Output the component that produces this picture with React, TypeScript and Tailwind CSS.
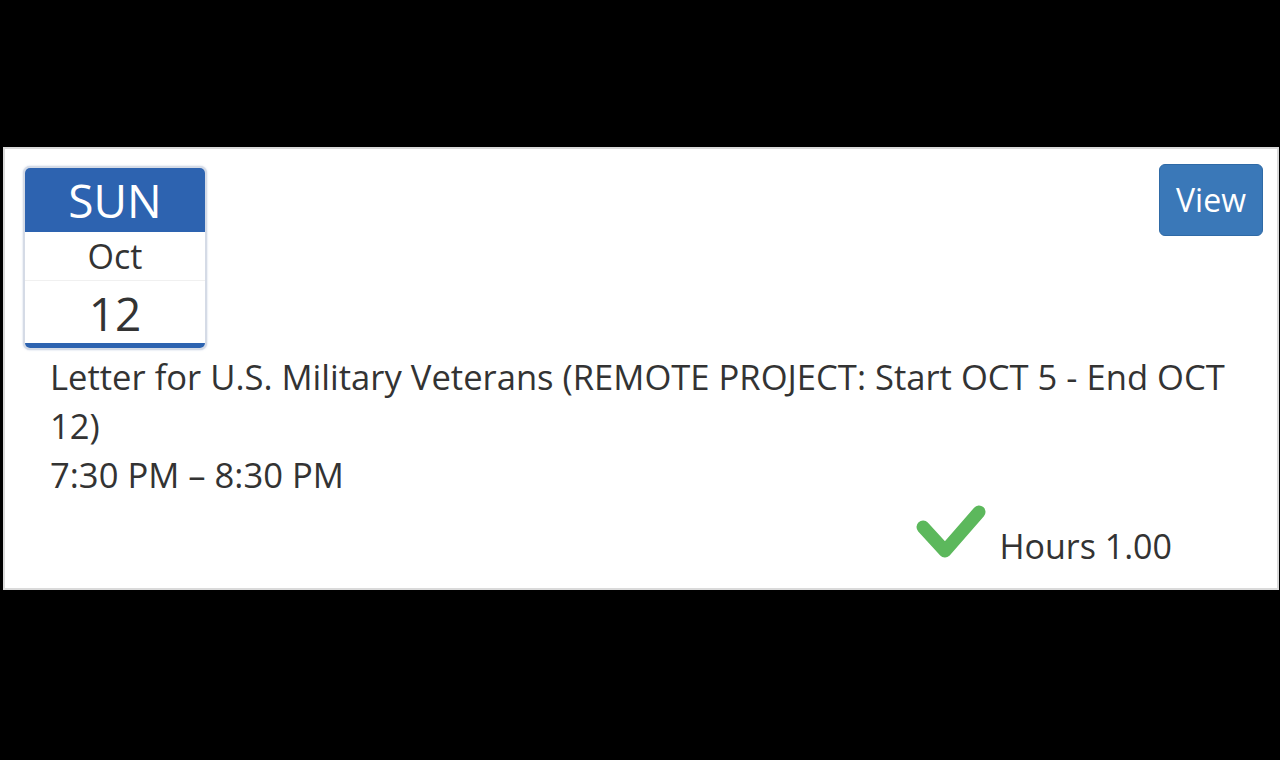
import React from 'react';

const font = { fontFamily: '"Open Sans", "Noto Sans", sans-serif' };

const CalendarBadge: React.FC = () => (
    <div className="w-[184px] rounded-[7px] border-2 border-[#d5dbe6] overflow-hidden bg-white shadow-[0_0_2px_rgba(80,110,170,0.35)]">
        <div className="h-[64px] bg-[#2d63b0] text-white text-[46px] leading-[64px] text-center">SUN</div>
        <div className="h-[49px] border-b border-[#f0f0f0] text-[#333] text-[34px] leading-[49px] text-center">Oct</div>
        <div className="h-[62px] text-[#333] text-[46px] leading-[64px] text-center">12</div>
        <div className="h-[5px] bg-[#2d63b0]" />
    </div>
);

export default function App() {
    return (
        <div className="min-h-screen bg-black pt-[147px] pl-[3px] pr-[1px]" style={font}>
            <div className="h-[443px] bg-white border-2 border-[#dadada] flex flex-col">
                {/* fecha + botón */}
                <div className="flex items-start justify-between pt-[15px] pl-[18px] pr-[14px]">
                    <div className="mt-[2px]">
                        <CalendarBadge />
                    </div>
                    <button className="w-[104px] h-[72px] rounded-[6px] bg-[#3a78b8] border border-[#2f6aa6] text-white text-[32px]">
                        View
                    </button>
                </div>

                <div className="pl-[45px] pr-[40px] mt-[2px] text-[34.6px] leading-[49px] text-[#333]">
                    <div>Letter for U.S. Military Veterans (REMOTE PROJECT: Start OCT 5 - End OCT 12)</div>
                    <div>7:30 PM – 8:30 PM</div>
                </div>

                <div className="flex items-end justify-end pr-[105px] mt-[5px]">
                    <svg width="70" height="56" viewBox="0 0 70 56" className="mb-[11px]">
                        <path
                            d="M7 23 L29 47 L63 8"
                            fill="none"
                            stroke="#5cb85c"
                            strokeWidth="13"
                            strokeLinecap="round"
                            strokeLinejoin="round"
                        />
                    </svg>
                    <span className="ml-[13px] text-[34px] leading-[49px] text-[#333]">Hours 1.00</span>
                </div>
            </div>
        </div>
    );
}
